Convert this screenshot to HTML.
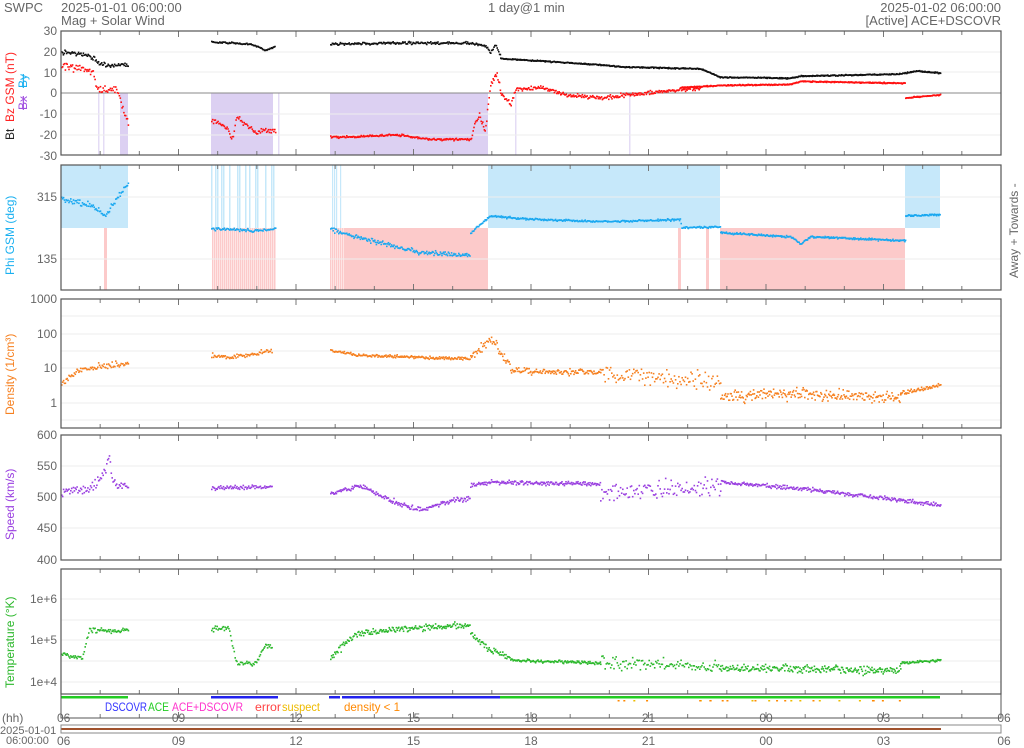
<!DOCTYPE html>
<html><head><meta charset="utf-8"><style>
html,body{margin:0;padding:0;background:#fff;width:1024px;height:748px;overflow:hidden}
svg{display:block;font-family:"Liberation Sans","DejaVu Sans",sans-serif}
.t{fill:#666;font-size:12px}
</style></head><body>
<svg id="s" width="1024" height="748" viewBox="0 0 1024 748" xmlns="http://www.w3.org/2000/svg">
<text x="4" y="12" font-size="13" fill="#666">SWPC</text>
<text x="61" y="12" font-size="13" fill="#666">2025-01-01 06:00:00</text>
<text x="61" y="25" font-size="13" fill="#666">Mag + Solar Wind</text>
<text x="488" y="12" font-size="13" fill="#666">1 day@1 min</text>
<text x="1001" y="12" font-size="13" fill="#666" text-anchor="end">2025-01-02 06:00:00</text>
<text x="1001" y="25" font-size="13" fill="#666" text-anchor="end">[Active] ACE+DSCOVR</text>
<g id="bg"></g><g id="grid"></g><g id="dots"></g><g id="frames"></g>
<g class="t" text-anchor="end">
<text x="57" y="35">30</text><text x="57" y="56">20</text><text x="57" y="77">10</text><text x="57" y="97">0</text><text x="57" y="118">-10</text><text x="57" y="139">-20</text><text x="57" y="160">-30</text>
<text x="57" y="201">315</text><text x="57" y="263">135</text>
<text x="57" y="303">1000</text><text x="57" y="338">100</text><text x="57" y="372">10</text><text x="57" y="407">1</text>
<text x="57" y="439">600</text><text x="57" y="470">550</text><text x="57" y="501">500</text><text x="57" y="532">450</text><text x="57" y="564">400</text>
<text x="57" y="603">1e+6</text><text x="57" y="644">1e+5</text><text x="57" y="686">1e+4</text>
</g>
<g font-size="12">
<text transform="translate(14,140) rotate(-90)" fill="#222">Bt</text>
<text transform="translate(14,122) rotate(-90)" fill="#f22">Bz GSM (nT)</text>
<text transform="translate(27,110) rotate(-90)" fill="#a050e0" text-decoration="line-through">Bx</text>
<text transform="translate(27,88) rotate(-90)" fill="#1ab0f0" text-decoration="line-through">By</text>
<text transform="translate(14,275) rotate(-90)" fill="#1ab0f0">Phi GSM (deg)</text>
<text transform="translate(1018,278) rotate(-90)" fill="#666">Away +  Towards -</text>
<text transform="translate(14,415) rotate(-90)" fill="#f68020">Density (1/cm³)</text>
<text transform="translate(14,540) rotate(-90)" fill="#9a40e0">Speed (km/s)</text>
<text transform="translate(14,688) rotate(-90)" fill="#2cb82c">Temperature (°K)</text>
</g>
<g font-size="12">
<text x="105" y="711" fill="#33f" textLength="42" lengthAdjust="spacingAndGlyphs">DSCOVR</text>
<text x="148" y="711" fill="#2c2" textLength="21" lengthAdjust="spacingAndGlyphs">ACE</text>
<text x="172" y="711" fill="#f3c" textLength="71" lengthAdjust="spacingAndGlyphs">ACE+DSCOVR</text>
<text x="255" y="711" fill="#f44" textLength="26" lengthAdjust="spacingAndGlyphs">error</text>
<text x="282" y="711" fill="#eb0" textLength="38" lengthAdjust="spacingAndGlyphs">suspect</text>
<text x="344" y="711" fill="#f80" textLength="56" lengthAdjust="spacingAndGlyphs">density &lt; 1</text>
</g>
<g class="t">
<text x="2" y="722">(hh)</text>
<text x="0" y="734" font-size="11">2025-01-01</text>
<text x="6" y="744" font-size="11">06:00:00</text>
</g>
<g id="xl" class="t" text-anchor="middle"></g>
</svg>
<script>
var NS="http://www.w3.org/2000/svg",S=document.getElementById('s');
function el(p,t,a){var e=document.createElementNS(NS,t);for(var k in a)e.setAttribute(k,a[k]);document.getElementById(p).appendChild(e);return e}
var X0=61,X1=1001,panels=[[31,155],[165,290],[299,428],[435,560],[569,694]];
var seed=7;function r(){seed=(seed*16807)%2147483647;return seed/2147483647}
function n(){return (r()+r()+r()-1.5)}
el('bg','rect',{x:120,y:93,width:8,height:62,fill:'#dcd0f2'});
el('bg','rect',{x:211,y:93,width:62,height:62,fill:'#dcd0f2'});
el('bg','rect',{x:330,y:93,width:158,height:62,fill:'#dcd0f2'});
[98,103,278,515,629].forEach(function(x){el('bg','rect',{x:x,y:93,width:1.5,height:62,fill:'#e4dcf5'})});
el('bg','rect',{x:61,y:165,width:67,height:63,fill:'#c6e8fa'});
el('bg','rect',{x:488,y:165,width:232,height:63,fill:'#c6e8fa'});
el('bg','rect',{x:905,y:165,width:35,height:63,fill:'#c6e8fa'});
el('bg','rect',{x:345,y:228,width:143,height:62,fill:'#fccaca'});
el('bg','rect',{x:720,y:228,width:185,height:62,fill:'#fccaca'});
for(var x=211;x<274;x+=2){if(r()<.6)el('bg','rect',{x:x,y:165,width:1.5,height:63,fill:'#c6e8fa'});el('bg','rect',{x:x+1,y:228,width:1.5,height:62,fill:'#fccaca'})}
for(var x=330;x<345;x+=2){el('bg','rect',{x:x,y:228,width:1.5,height:62,fill:'#fccaca'});if(r()<.4)el('bg','rect',{x:x,y:165,width:1.2,height:63,fill:'#c6e8fa'})}
el('bg','rect',{x:104,y:228,width:3,height:62,fill:'#fccaca'});
el('bg','rect',{x:678,y:228,width:3,height:62,fill:'#fccaca'});
el('bg','rect',{x:706,y:228,width:3,height:62,fill:'#fccaca'});
var hx=function(h){return X0+h*(X1-X0)/24};
var grids=[[52,72,114,135],[197,259],[316,334,351,368,386,403,420],[466,497,528],[599,620,640,661,682]];
panels.forEach(function(p,i){
 grids[i].forEach(function(y){el('grid','line',{x1:X0,x2:X1,y1:y,y2:y,stroke:'#eee'})});
 for(var h=1;h<24;h++){var x=hx(h),L=h%3==0?6:4;el('grid','line',{x1:x,x2:x,y1:p[0],y2:p[0]+L,stroke:'#777'});el('grid','line',{x1:x,x2:x,y1:p[1],y2:p[1]-L,stroke:'#777'})}
 el('frames','rect',{x:X0,y:p[0],width:X1-X0,height:p[1]-p[0],fill:'none',stroke:'#555','stroke-width':1.2});
});
el('grid','line',{x1:X0,x2:X1,y1:93,y2:93,stroke:'#888'});
el('frames','rect',{x:X0,y:694,width:X1-X0,height:24,fill:'none',stroke:'#555','stroke-width':1});
for(var h=1;h<24;h++){var x=hx(h);el('grid','line',{x1:x,x2:x,y1:718,y2:h%3==0?712:714,stroke:'#777'})}
[[61,128,'#2c2'],[211,278,'#22e'],[329,340,'#22e'],[342,500,'#22e'],[500,940,'#2c2']].forEach(function(s){el('grid','rect',{x:s[0],y:696,width:s[1]-s[0],height:2.5,fill:s[2]})});
for(var i=0;i<25;i++){var x=600+r()*300;el('grid','rect',{x:x,y:700,width:2,height:1.5,fill:r()<.5?'#f80':'#eb0'})}
el('frames','rect',{x:X0,y:725,width:X1-X0,height:8,fill:'none',stroke:'#888'});
el('grid','rect',{x:X0,y:728,width:880,height:2,fill:'#a0522d'});
var labs=['06','09','12','15','18','21','00','03','06'];
labs.forEach(function(l,i){var x=hx(i*3);
 var xx=i==0?57:(i==8?1004:x);var an=i==0?'start':'middle';
 var t=el('xl','text',{x:xx,y:722,'text-anchor':an});t.textContent=l;
 var t2=el('xl','text',{x:xx,y:745,'text-anchor':an});t2.textContent=l;});
function seg(a,b,f,col,step,jit,sz){for(var x=a;x<=b;x+=step){var y=f(x)+n()*jit;el('dots','rect',{x:x,y:y,width:sz||1.6,height:sz||1.6,fill:col})}}
function lin(pts){return function(x){for(var i=0;i<pts.length-1;i++){if(x<=pts[i+1][0]){var t=(x-pts[i][0])/(pts[i+1][0]-pts[i][0]);return pts[i][1]+t*(pts[i+1][1]-pts[i][1])}}return pts[pts.length-1][1]}}
var bt=function(v){return 93-v*2.07};
seg(61,128,lin([[61,bt(20)],[80,bt(19.5)],[90,bt(18)],[100,bt(14)],[128,bt(14)]]),'#111',0.8,2);
seg(211,275,lin([[211,bt(25)],[250,bt(24)],[265,bt(21)],[275,bt(23)]]),'#111',0.8,0.8);
seg(330,500,lin([[330,bt(24)],[400,bt(24.5)],[470,bt(24.5)],[485,bt(23)],[490,bt(20)],[495,bt(24)],[500,bt(18)]]),'#111',0.8,1.2);
seg(500,940,lin([[500,bt(17)],[600,bt(14)],[620,bt(13)],[700,bt(12)],[720,bt(8)],[790,bt(7.5)],[800,bt(8.5)],[900,bt(9.5)],[915,bt(11)],[940,bt(10)]]),'#111',0.6,0.6);
seg(61,128,lin([[61,bt(14)],[85,bt(12)],[92,bt(10)],[97,bt(2)],[117,bt(2)],[120,bt(-5)],[128,bt(-13)]]),'#f11',0.9,4);
seg(211,275,lin([[211,bt(-13)],[225,bt(-16)],[232,bt(-22)],[236,bt(-11)],[255,bt(-19)],[265,bt(-17)],[275,bt(-19)]]),'#f11',0.9,3);
seg(330,470,lin([[330,bt(-21)],[400,bt(-20)],[430,bt(-22)],[470,bt(-22)]]),'#f11',0.8,1.2);
seg(470,500,lin([[470,bt(-22)],[478,bt(-10)],[485,bt(-17)],[490,bt(5)],[497,bt(10)],[500,bt(0)]]),'#f11',0.8,4);
seg(500,700,lin([[500,bt(0)],[510,bt(-5)],[515,bt(2)],[540,bt(3)],[570,bt(-1)],[600,bt(-2)],[640,bt(0)],[680,bt(2)],[700,bt(3)]]),'#f11',0.8,2);
seg(680,905,lin([[680,bt(3)],[720,bt(4)],[790,bt(4.5)],[800,bt(6)],[905,bt(5)]]),'#f11',0.6,0.6);
seg(905,940,lin([[905,bt(-2)],[940,bt(-0.5)]]),'#f11',0.6,0.6);
seg(61,128,lin([[61,198],[90,205],[105,215],[115,200],[128,182]]),'#1aa8f0',0.9,3);
seg(211,275,lin([[211,228],[260,230],[275,228]]),'#1aa8f0',0.9,1.5);
seg(330,470,lin([[330,228],[350,235],[380,242],[420,252],[470,254]]),'#1aa8f0',0.8,2.5);
seg(470,720,lin([[470,232],[490,215],[520,218],[600,221],[680,219],[681,227],[720,226]]),'#1aa8f0',0.8,1);
seg(720,905,lin([[720,232],[790,236],[800,243],[810,236],[905,240]]),'#1aa8f0',0.7,1);
seg(905,940,lin([[905,215],[940,214]]),'#1aa8f0',0.7,0.8);
var dn=function(v){return 403-34.5*Math.log10(v)};
seg(61,128,lin([[61,dn(4)],[80,dn(10)],[128,dn(15)]]),'#f68020',0.9,3);
seg(211,272,lin([[211,dn(25)],[230,dn(22)],[272,dn(35)]]),'#f68020',0.9,2);
seg(330,470,lin([[330,dn(35)],[360,dn(25)],[470,dn(20)]]),'#f68020',0.8,1.5);
seg(470,510,lin([[470,dn(20)],[490,dn(80)],[500,dn(30)],[510,dn(12)]]),'#f68020',0.8,5);
seg(510,600,lin([[510,dn(9)],[600,dn(8)]]),'#f68020',0.8,3);
seg(600,720,lin([[600,dn(7)],[720,dn(4)]]),'#f68020',1.1,9);
seg(720,900,lin([[720,dn(1.5)],[800,dn(2)],[900,dn(1.5)]]),'#f68020',0.8,6);
seg(900,940,lin([[900,dn(2)],[940,dn(3.5)]]),'#f68020',0.8,2);
var sp=function(v){return 497-(v-500)*0.62};
seg(61,128,lin([[61,sp(510)],[90,sp(515)],[105,sp(540)],[108,sp(570)],[112,sp(525)],[128,sp(515)]]),'#9a40e0',0.9,5);
seg(211,272,lin([[211,sp(515)],[272,sp(518)]]),'#9a40e0',0.9,2);
seg(330,470,lin([[330,sp(505)],[360,sp(520)],[390,sp(495)],[420,sp(480)],[450,sp(495)],[470,sp(500)]]),'#9a40e0',0.8,2.5);
seg(470,600,lin([[470,sp(520)],[490,sp(525)],[600,sp(522)]]),'#9a40e0',0.8,2);
seg(600,720,lin([[600,sp(510)],[720,sp(515)]]),'#9a40e0',1.1,9);
seg(720,940,lin([[720,sp(525)],[800,sp(515)],[880,sp(500)],[940,sp(488)]]),'#9a40e0',0.8,2);
var tp=function(v){return 682-41.5*Math.log10(v/1e4)};
seg(61,128,lin([[61,tp(5e4)],[82,tp(4e4)],[88,tp(1.8e5)],[128,tp(1.8e5)]]),'#2cb82c',0.9,2.5);
seg(211,272,lin([[211,tp(2e5)],[228,tp(2e5)],[236,tp(3e4)],[255,tp(3e4)],[265,tp(8e4)],[272,tp(8e4)]]),'#2cb82c',0.9,2.5);
seg(330,470,lin([[330,tp(4e4)],[355,tp(1.5e5)],[400,tp(2e5)],[470,tp(2.5e5)]]),'#2cb82c',0.8,3);
seg(470,510,lin([[470,tp(1.5e5)],[490,tp(6e4)],[510,tp(4e4)]]),'#2cb82c',0.8,3);
seg(510,600,lin([[510,tp(3.5e4)],[600,tp(3e4)]]),'#2cb82c',0.8,1.5);
seg(600,720,lin([[600,tp(3e4)],[720,tp(2.5e4)]]),'#2cb82c',1.1,6);
seg(720,900,lin([[720,tp(2.2e4)],[900,tp(2e4)]]),'#2cb82c',0.8,4);
seg(900,940,lin([[900,tp(3e4)],[940,tp(3.5e4)]]),'#2cb82c',0.8,1.5);
</script>
</body></html>
